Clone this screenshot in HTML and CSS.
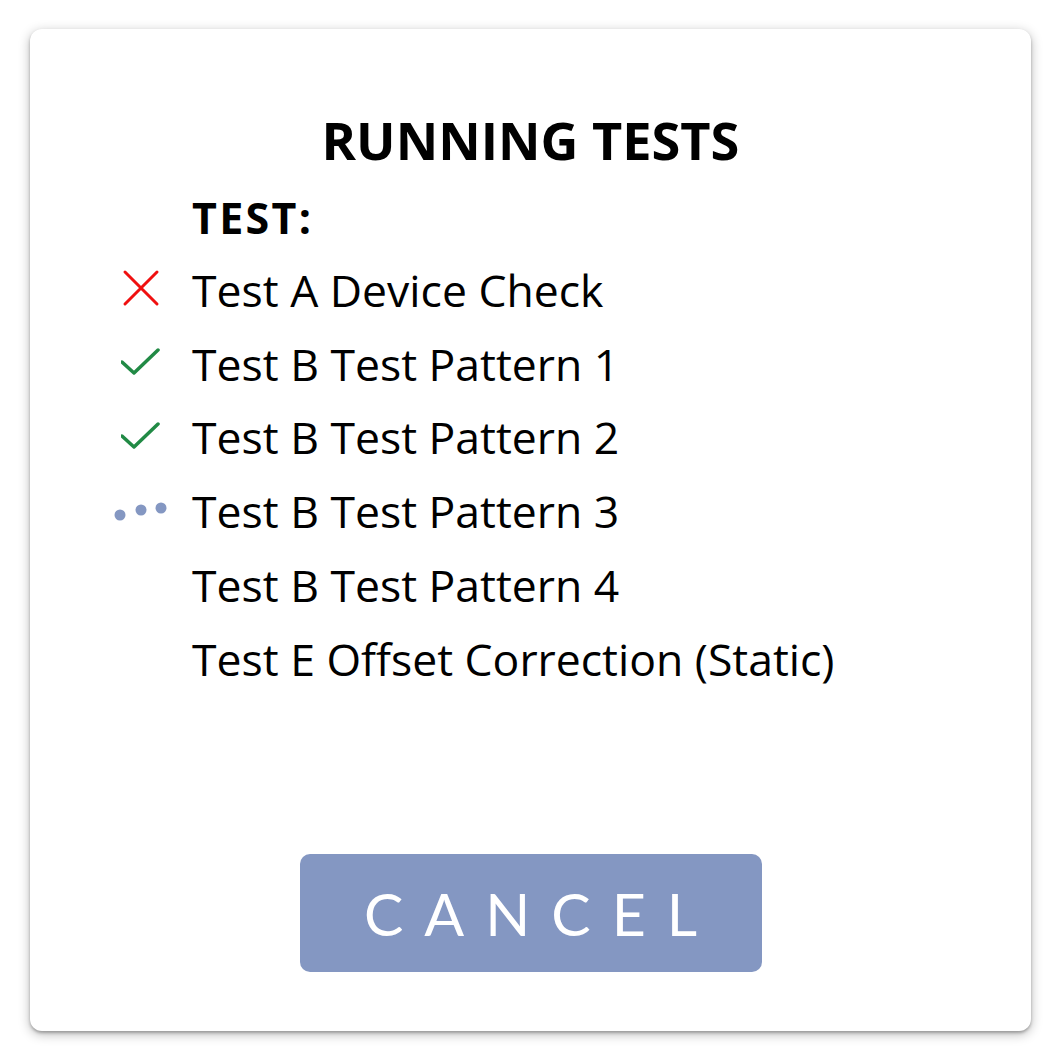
FILE: index.html
```html
<!DOCTYPE html>
<html>
<head>
<meta charset="utf-8">
<link rel="stylesheet" href="styles.css">
</head>
<body>
<div class="card">
  <h1 class="title">RUNNING TESTS</h1>
  <div class="list">
    <div class="row header"><span class="icon"></span><span class="label">TEST:</span></div>
    <div class="row">
      <span class="icon">
        <svg width="40" height="40" viewBox="0 0 40 40"><path d="M4 3 L36 35 M36 3 L4 35" stroke="#f01010" stroke-width="3" stroke-linecap="round" fill="none"/></svg>
      </span>
      <span class="label">Test A Device Check</span>
    </div>
    <div class="row">
      <span class="icon">
        <svg width="40" height="40" viewBox="0 0 40 40"><path d="M1 19 L13 30 L37 7" stroke="#218a45" stroke-width="3.5" stroke-linecap="round" stroke-linejoin="round" fill="none"/></svg>
      </span>
      <span class="label">Test B Test Pattern 1</span>
    </div>
    <div class="row">
      <span class="icon">
        <svg width="40" height="40" viewBox="0 0 40 40"><path d="M1 19 L13 30 L37 7" stroke="#218a45" stroke-width="3.5" stroke-linecap="round" stroke-linejoin="round" fill="none"/></svg>
      </span>
      <span class="label">Test B Test Pattern 2</span>
    </div>
    <div class="row">
      <span class="icon">
        <svg width="60" height="40" viewBox="0 0 60 40"><circle cx="9" cy="24" r="5.5" fill="#8497c2"/><circle cx="30" cy="19" r="5.5" fill="#8497c2"/><circle cx="50" cy="17" r="5.5" fill="#8497c2"/></svg>
      </span>
      <span class="label">Test B Test Pattern 3</span>
    </div>
    <div class="row"><span class="icon"></span><span class="label">Test B Test Pattern 4</span></div>
    <div class="row"><span class="icon"></span><span class="label">Test E Offset Correction (Static)</span></div>
  </div>
  <button class="cancel">CANCEL</button>
</div>
</body>
</html>
```
FILE: styles.css
```css
html, body {
  margin: 0;
  padding: 0;
  background: #ffffff;
}
body {
  width: 1062px;
  height: 1062px;
  padding: 29px 0 0 30px;
  box-sizing: border-box;
  font-family: "Open Sans", "Noto Sans", sans-serif;
  color: #000;
}
.card {
  width: 1001px;
  height: 1002px;
  box-sizing: border-box;
  background: #fff;
  border-radius: 12px;
  box-shadow: 0 2px 3px rgba(0,0,0,0.25), 0 3px 12px rgba(0,0,0,0.28);
  display: flex;
  flex-direction: column;
  align-items: center;
  padding: 77px 0 59px 0;
}
.title {
  margin: 0;
  font-size: 52.3px;
  line-height: 68px;
  font-weight: 700;
}
.list {
  align-self: flex-start;
  margin-left: 80px;
  margin-top: 9px;
  display: flex;
  flex-direction: column;
}
.row {
  display: flex;
  align-items: center;
  height: 73.8px;
}
.row.header {
  height: 69.5px;
}
.icon {
  width: 62px;
  padding-right: 20px;
  display: flex;
  justify-content: center;
  align-items: center;
}
.label {
  font-size: 44.5px;
  white-space: nowrap;
}
.header .label {
  font-weight: 700;
  font-size: 43px;
  letter-spacing: 2.3px;
}
.cancel {
  margin-top: auto;
  width: 462px;
  height: 118px;
  border: none;
  border-radius: 10px;
  background: #8497c2;
  color: #fff;
  font-family: "Lato", "Inter", sans-serif;
  font-weight: 400;
  font-size: 59px;
  letter-spacing: 21px;
  padding: 0 0 0 21px;
}
```
